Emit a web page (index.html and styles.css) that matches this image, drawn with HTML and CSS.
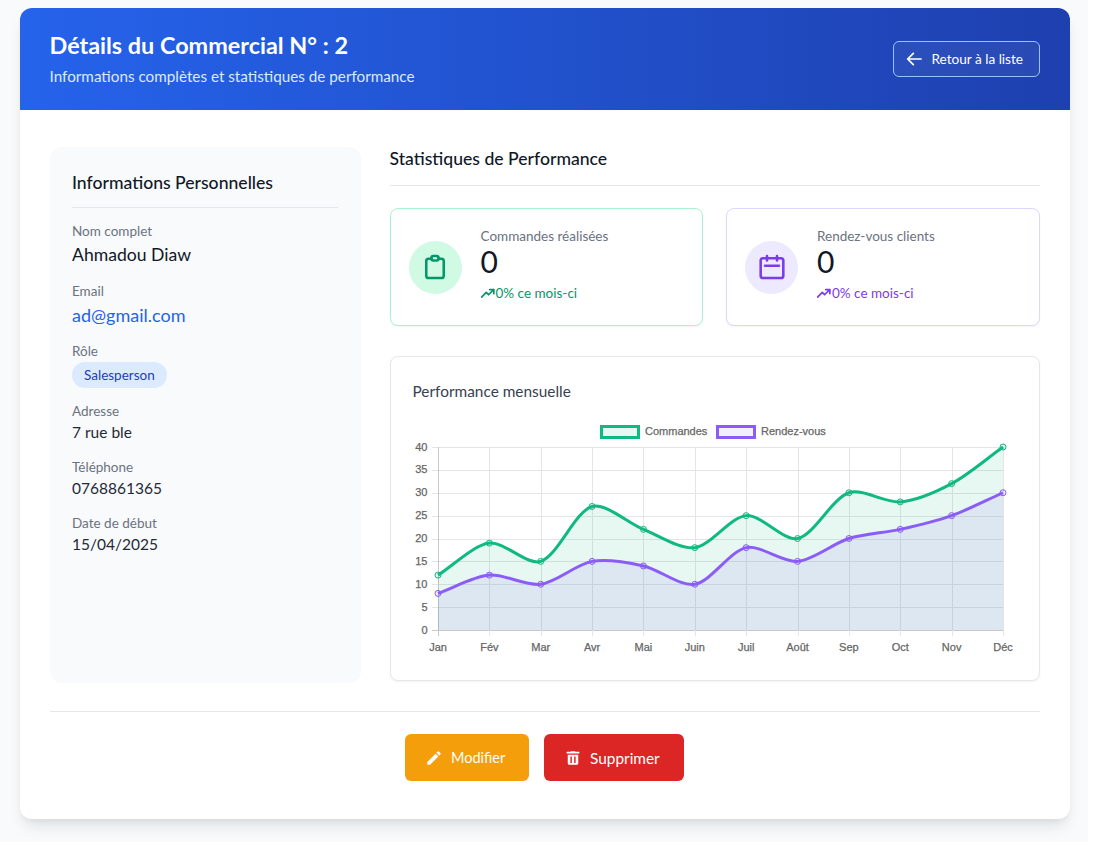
FILE: index.html
```html
<!DOCTYPE html>
<html lang="fr">
<head>
    <meta charset="UTF-8">
    <meta name="viewport" content="width=device-width, initial-scale=1.0">
    <title>Détails du Commercial</title>
    <link rel="stylesheet" href="styles.css">
</head>
<body>
<div class="page">
    <div class="card">
        <!-- Header -->
        <header class="card-header">
            <div class="card-title">
                <h1>Détails du Commercial N° : 2</h1>
                <p>Informations complètes et statistiques de performance</p>
            </div>
            <a class="back-btn" href="#">
                <svg width="16" height="16" viewBox="0 0 24 24" fill="none" stroke="currentColor" stroke-width="2.6" stroke-linecap="round" stroke-linejoin="round"><path d="M22.5 12h-20M11 3.5 2.5 12l8.5 8.5"/></svg>
                Retour à la liste
            </a>
        </header>

        <div class="card-body">
            <div class="columns">
                <!-- Infos -->
                <aside class="info-panel">
                    <h2>Informations Personnelles</h2>
                    <div class="info-item">
                        <span class="info-label">Nom complet</span>
                        <span class="info-value big">Ahmadou Diaw</span>
                    </div>
                    <div class="info-item">
                        <span class="info-label">Email</span>
                        <a class="info-value big link" href="#">ad@gmail.com</a>
                    </div>
                    <div class="info-item">
                        <span class="info-label">Rôle</span>
                        <span class="role-badge">Salesperson</span>
                    </div>
                    <div class="info-item">
                        <span class="info-label">Adresse</span>
                        <span class="info-value">7 rue ble</span>
                    </div>
                    <div class="info-item">
                        <span class="info-label">Téléphone</span>
                        <span class="info-value">0768861365</span>
                    </div>
                    <div class="info-item">
                        <span class="info-label">Date de début</span>
                        <span class="info-value">15/04/2025</span>
                    </div>
                </aside>

                <!-- Stats -->
                <section class="stats">
                    <h2 class="stats-title">Statistiques de Performance</h2>
                    <div class="stat-cards">
                        <div class="stat-card green">
                            <div class="stat-icon">
                                <svg width="28" height="28" viewBox="0 0 24 24" fill="none" stroke="currentColor" stroke-width="2.2" stroke-linecap="round" stroke-linejoin="round"><path d="M9 5H6.5a2 2 0 0 0-2 2v12.5a2 2 0 0 0 2 2h11a2 2 0 0 0 2-2V7a2 2 0 0 0-2-2H15"/><rect x="9" y="2.5" width="6" height="4" rx="1.5"/></svg>
                            </div>
                            <div class="stat-text">
                                <div class="stat-label">Commandes réalisées</div>
                                <div class="stat-number">0</div>
                                <div class="stat-trend">
                                    <svg width="14" height="14" viewBox="0 0 24 24" fill="none" stroke="currentColor" stroke-width="3" stroke-linecap="round" stroke-linejoin="round"><path d="M1 19l8-8 4 4 9-9M15 6h7v7"/></svg>0% ce mois-ci
                                </div>
                            </div>
                        </div>
                        <div class="stat-card purple">
                            <div class="stat-icon">
                                <svg width="28" height="28" viewBox="0 0 24 24" fill="none" stroke="currentColor" stroke-width="2.2" stroke-linecap="round" stroke-linejoin="round"><rect x="2.3" y="4.5" width="19.4" height="17" rx="2"/><path d="M7.7 2.5v4M16.3 2.5v4M6 11h12"/></svg>
                            </div>
                            <div class="stat-text">
                                <div class="stat-label">Rendez-vous clients</div>
                                <div class="stat-number">0</div>
                                <div class="stat-trend">
                                    <svg width="14" height="14" viewBox="0 0 24 24" fill="none" stroke="currentColor" stroke-width="3" stroke-linecap="round" stroke-linejoin="round"><path d="M1 19l8-8 4 4 9-9M15 6h7v7"/></svg>0% ce mois-ci
                                </div>
                            </div>
                        </div>
                    </div>

                    <div class="chart-card">
                        <h3>Performance mensuelle</h3>
                        <div id="chart" class="chart"></div>
                    </div>
                </section>
            </div>

            <!-- Actions -->
            <div class="actions">
                <a class="action-btn orange" href="#">
                    <svg width="18" height="18" viewBox="0 0 24 24" fill="currentColor"><path d="M3 17.25V21h3.75L17.81 9.94l-3.75-3.75L3 17.25zM20.71 7.04a1 1 0 0 0 0-1.41l-2.34-2.34a1 1 0 0 0-1.41 0l-1.83 1.83 3.75 3.75 1.83-1.83z"/></svg>
                    Modifier
                </a>
                <a class="action-btn red" href="#">
                    <svg width="18" height="18" viewBox="0 0 24 24" fill="currentColor" fill-rule="evenodd"><path d="M5 7.5h14V19a2 2 0 0 1-2 2H7a2 2 0 0 1-2-2V7.5zM8.5 10v8.5h2V10h-2zm5 0v8.5h2V10h-2zM3.5 3.8h5L9.5 3h5l1 .8h5V6h-17V3.8z"/></svg>
                    Supprimer
                </a>
            </div>
        </div>
    </div>
</div>

<script src="chart.js"></script>
</body>
</html>
```

FILE: styles.css
```css
* {
    box-sizing: border-box;
}

html {
    background: #fff;
}

body {
    margin: 0;
    width: 1088px;
    font-family: "Lato", "Noto Sans", sans-serif;
    background-color: #f9fafb;
    color: #111827;
}

.page {
    padding: 8px 18.5px 23px 19.5px;
}

.card {
    background: #fff;
    border-radius: 12px;
    box-shadow: 0 10px 15px -3px rgba(0, 0, 0, 0.1), 0 4px 6px -2px rgba(0, 0, 0, 0.05);
    overflow: hidden;
}

/* Header */
.card-header {
    height: 102px;
    padding: 0 30px;
    display: flex;
    align-items: center;
    justify-content: space-between;
    color: #fff;
    background: linear-gradient(90deg, #2563eb, #1e40af);
}

.card-title {
    padding-bottom: 2px;
}

.card-header h1 {
    margin: 0 0 3px;
    font-size: 23.4px;
    line-height: 32px;
    font-weight: 700;
}

.card-header p {
    margin: 0;
    font-size: 15.25px;
    line-height: 24px;
    color: #dbeafe;
}

.back-btn {
    width: 147px;
    height: 36px;
    padding-left: 12px;
    display: flex;
    align-items: center;
    gap: 10px;
    border: 1px solid #93c5fd;
    border-radius: 6px;
    background: rgba(255, 255, 255, 0.05);
    color: #fff;
    font-size: 13.6px;
    text-decoration: none;
}

.card-body {
    padding: 37px 30px 38px;
}

.columns {
    display: grid;
    grid-template-columns: 311px minmax(0, 1fr);
    gap: 29px;
}

/* Infos */
.info-panel {
    height: 536px;
    padding: 24px 22.5px;
    border-radius: 12px;
    background: #f9fafb;
}

.info-panel h2 {
    margin: 0 0 15px;
    padding-bottom: 12px;
    border-bottom: 1px solid #e5e7eb;
    font-size: 17.6px;
    line-height: 24px;
    font-weight: 500;
}

.info-item {
    margin-bottom: 15px;
}

.info-label {
    display: block;
    font-size: 13.5px;
    line-height: 16px;
    color: #6b7280;
}

.info-value {
    display: block;
    margin-top: 2px;
    font-size: 15.5px;
    line-height: 23px;
    color: #1f2937;
}

.info-value.big {
    margin-top: 3px;
    font-size: 17.6px;
    line-height: 26px;
    color: #111827;
}

.info-value.link {
    font-size: 18px;
    color: #2563eb;
    text-decoration: none;
}

.role-badge {
    display: inline-block;
    margin-top: 3px;
    padding: 0 12px;
    height: 26px;
    border-radius: 13px;
    background: #dbeafe;
    color: #1e40af;
    font-size: 13.5px;
    line-height: 26px;
}

/* Stats */
.stats-title {
    margin: 0 0 22px;
    padding-bottom: 14px;
    border-bottom: 1px solid #e5e7eb;
    font-size: 17.6px;
    line-height: 24px;
    font-weight: 500;
}

.stat-cards {
    display: grid;
    grid-template-columns: 1fr 1fr;
    gap: 23px;
    margin-bottom: 30px;
}

.stat-card {
    height: 118px;
    padding: 0 18px;
    display: flex;
    align-items: center;
    gap: 19px;
    border: 1px solid;
    border-radius: 8px;
    background: #fff;
    box-shadow: 0 1px 2px rgba(0, 0, 0, 0.05);
}

.stat-card.green {
    border-color: #a7f3d0;
}

.stat-card.purple {
    border-color: #ddd6fe;
}

.stat-icon {
    width: 53px;
    height: 53px;
    flex-shrink: 0;
    display: flex;
    align-items: center;
    justify-content: center;
    border-radius: 50%;
}

.green .stat-icon {
    background: #d1fae5;
    color: #059669;
}

.purple .stat-icon {
    background: #ede9fe;
    color: #7c3aed;
}

.stat-text {
    padding-bottom: 7px;
}

.stat-label {
    font-size: 13.5px;
    line-height: 20px;
    color: #6b7280;
}

.stat-number {
    margin-top: -1px;
    font-size: 30px;
    line-height: 32px;
    color: #111827;
}

.stat-trend {
    display: flex;
    align-items: center;
    gap: 1px;
    margin-top: 7px;
    font-size: 13.5px;
    line-height: 18px;
}

.green .stat-trend {
    color: #059669;
}

.purple .stat-trend {
    color: #7c3aed;
}

.chart-card {
    height: 325px;
    padding: 22px 22px 0;
    border: 1px solid #e5e7eb;
    border-radius: 8px;
    background: #fff;
    box-shadow: 0 1px 2px rgba(0, 0, 0, 0.05);
}

.chart-card h3 {
    margin: 0;
    font-size: 15.4px;
    line-height: 24px;
    font-weight: 400;
    color: #374151;
}

.chart {
    margin: 13px 0 0 -23px;
}

.chart svg {
    display: block;
}

.chart text {
    font-family: "Liberation Sans", Arial, sans-serif;
    font-size: 11px;
    fill: #666;
    stroke: #666;
    stroke-width: 0.25px;
}

/* Actions */
.actions {
    margin-top: 28px;
    padding-top: 22px;
    border-top: 1px solid #e5e7eb;
    display: flex;
    justify-content: center;
    gap: 15px;
}

.action-btn {
    height: 47px;
    padding-left: 20px;
    display: flex;
    align-items: center;
    gap: 8px;
    border-radius: 6px;
    color: #fff;
    text-decoration: none;
}

.action-btn.orange {
    width: 124px;
    background: #f59e0b;
    font-size: 14.5px;
}

.action-btn.red {
    width: 140px;
    background: #dc2626;
    font-size: 15.4px;
}
```

FILE: chart.js
```js
// Monthly performance chart, drawn as svg
const months = ["Jan", "Fév", "Mar", "Avr", "Mai", "Juin", "Juil", "Août", "Sep", "Oct", "Nov", "Déc"];
const series = [
    { name: "Commandes", color: "#10b981", fill: "rgba(16, 185, 129, 0.1)", data: [12, 19, 15, 27, 22, 18, 25, 20, 30, 28, 32, 40] },
    { name: "Rendez-vous", color: "#8b5cf6", fill: "rgba(139, 92, 246, 0.1)", data: [8, 12, 10, 15, 14, 10, 18, 15, 20, 22, 25, 30] }
];

// Plot area inside the svg
const plotLeft = 48, plotRight = 613, plotTop = 31, plotBottom = 214;
const tension = 0.3;
const stepX = (plotRight - plotLeft) / (months.length - 1);
const xAt = i => plotLeft + i * stepX;
const yAt = v => plotBottom - (v / 40) * (plotBottom - plotTop);

// Same spline as a line chart
function linePath(points) {
    let d = `M${points[0].x} ${points[0].y}`;
    const ctrl = points.map((p, i) => {
        const prev = points[i - 1] || p;
        const next = points[i + 1] || p;
        const d01 = Math.hypot(p.x - prev.x, p.y - prev.y);
        const d12 = Math.hypot(next.x - p.x, next.y - p.y);
        const total = d01 + d12;
        const fa = tension * d01 / total;
        const fb = tension * d12 / total;
        return {
            px: p.x - fa * (next.x - prev.x), py: p.y - fa * (next.y - prev.y),
            nx: p.x + fb * (next.x - prev.x), ny: p.y + fb * (next.y - prev.y)
        };
    });
    for (let i = 1; i < points.length; i++) {
        d += ` C${ctrl[i - 1].nx} ${ctrl[i - 1].ny} ${ctrl[i].px} ${ctrl[i].py} ${points[i].x} ${points[i].y}`;
    }
    return d;
}

let svg = "";

// Grid
for (let v = 0; v <= 40; v += 5) {
    const y = Math.round(yAt(v)) + 0.5;
    svg += `<line x1="${plotLeft - 6}" x2="${plotRight}" y1="${y}" y2="${y}" stroke="${v === 0 ? "#c8c8c8" : "#e5e5e5"}"/>`;
    svg += `<text x="${plotLeft - 10.5}" y="${yAt(v) + 3.5}" text-anchor="end">${v}</text>`;
}
months.forEach((m, i) => {
    const x = Math.round(xAt(i)) + 0.5;
    svg += `<line x1="${x}" x2="${x}" y1="${plotTop}" y2="${plotBottom + 6}" stroke="${i === 0 ? "#c8c8c8" : "#e5e5e5"}"/>`;
    svg += `<text x="${xAt(i)}" y="${plotBottom + 21}" text-anchor="middle">${m}</text>`;
});

// Series
series.forEach(s => {
    const points = s.data.map((v, i) => ({ x: xAt(i), y: yAt(v) }));
    const line = linePath(points);
    svg += `<path d="${line} L${plotRight} ${plotBottom} L${plotLeft} ${plotBottom} Z" fill="${s.fill}"/>`;
    svg += `<path d="${line}" fill="none" stroke="${s.color}" stroke-width="3"/>`;
    points.forEach(p => {
        svg += `<circle cx="${p.x}" cy="${p.y}" r="3" fill="${s.fill}" stroke="${s.color}"/>`;
    });
});

// Legend
svg += `<rect x="211.5" y="10.5" width="37" height="11" fill="rgba(16, 185, 129, 0.1)" stroke="#10b981" stroke-width="3"/>`;
svg += `<text x="255" y="19">Commandes</text>`;
svg += `<rect x="327.5" y="10.5" width="37" height="11" fill="rgba(139, 92, 246, 0.1)" stroke="#8b5cf6" stroke-width="3"/>`;
svg += `<text x="371" y="19">Rendez-vous</text>`;

document.getElementById("chart").innerHTML = `<svg width="640" height="240" viewBox="0 0 640 240">${svg}</svg>`;
```
